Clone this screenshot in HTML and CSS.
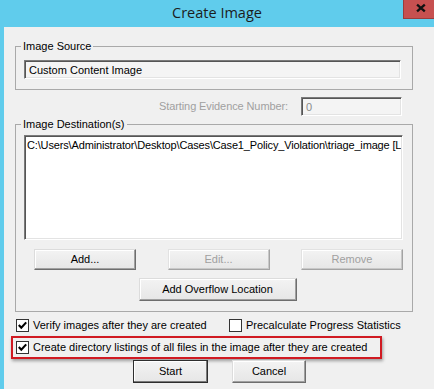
FILE: index.html
```html
<!DOCTYPE html>
<html lang="en">
<head>
    <meta charset="UTF-8">
    <title>Create Image</title>
    <link rel="stylesheet" href="styles.css">
</head>
<body>
    <div class="window">
        <div class="titlebar">
            Create Image
            <span class="close">
                <svg width="31" height="18" viewBox="0 0 31 18">
                    <path d="M13.5 4.5 L21.5 11.5 M21.5 4.5 L13.5 11.5" stroke="#111" stroke-width="2.4" fill="none"/>
                </svg>
            </span>
        </div>

        <div class="content">
            <fieldset class="group group-source">
                <legend>Image Source</legend>
                <div class="textbox source-box">Custom Content Image</div>
            </fieldset>

            <div class="evidence-row">
                <span class="label-disabled">Starting Evidence Number:</span>
                <div class="textbox evidence-box">0</div>
            </div>

            <fieldset class="group group-dest">
                <legend>Image Destination(s)</legend>
                <div class="listbox">
                    <div class="list-item">C:\Users\Administrator\Desktop\Cases\Case1_Policy_Violation\triage_image [L</div>
                </div>
                <div class="button-row">
                    <button class="btn btn-wide">Add...</button>
                    <button class="btn btn-wide" disabled>Edit...</button>
                    <button class="btn btn-wide" disabled>Remove</button>
                </div>
                <div class="overflow-row">
                    <button class="btn btn-overflow">Add Overflow Location</button>
                </div>
            </fieldset>

            <div class="check-row">
                <label class="check check-verify"><span class="box"><svg width="11" height="11" viewBox="0 0 11 11"><path d="M1.8 5 L4.3 7.8 L9.2 2.4" stroke="#000" stroke-width="2.1" fill="none"/></svg></span>Verify images after they are created</label>
                <label class="check"><span class="box"></span>Precalculate Progress Statistics</label>
            </div>

            <!-- red annotation frame -->
            <div class="highlight">
                <label class="check"><span class="box"><svg width="11" height="11" viewBox="0 0 11 11"><path d="M1.8 5 L4.3 7.8 L9.2 2.4" stroke="#000" stroke-width="2.1" fill="none"/></svg></span>Create directory listings of all files in the image after they are created</label>
            </div>

            <div class="action-row">
                <button class="btn btn-default">Start</button>
                <button class="btn btn-cancel">Cancel</button>
            </div>
        </div>
    </div>
</body>
</html>
```

FILE: styles.css
```css
* {
    margin: 0;
    padding: 0;
    box-sizing: border-box;
}

body {
    background: #f0f0f0;
    font-family: 'Liberation Sans', Arial, sans-serif;
    font-size: 11px;
    line-height: 13px;
    color: #000;
    overflow: hidden;
}

.window {
    width: 434px;
    height: 389px;
    display: flex;
    flex-direction: column;
}

.titlebar {
    position: relative;
    height: 27px;
    background: #60ccec;
    text-align: center;
    font-family: 'Open Sans', sans-serif;
    font-size: 14.5px;
    line-height: 25px;
    color: #1c1c1c;
}

.close {
    position: absolute;
    top: 0;
    right: 0;
    width: 31px;
    height: 19px;
    background: #c75050;
    border-left: 1px solid #9b3c3c;
    border-bottom: 1px solid #9b3c3c;
    display: flex;
}

.content {
    flex: 1;
    background: #f0f0f0;
    border-left: 4px solid #60ccec;
    padding: 13px 21px 0 11px;
}

.group {
    border: 1px solid #a9a9a9;
    min-width: 0;
    padding: 7px 9px 10px 8px;
}

.group legend {
    padding: 0 2px;
    margin-left: -3px;
    line-height: 13px;
}

.group-dest {
    margin-top: 2px;
    padding-top: 4px;
}

.textbox {
    height: 19px;
    line-height: 15px;
    padding-left: 4px;
    background: #f4f4f4;
    border: 1px solid;
    border-color: #7a7a7a #fff #fff #7a7a7a;
    box-shadow: inset 1px 1px #555, inset -1px -1px #e3e3e3;
    white-space: nowrap;
    overflow: hidden;
}

.source-box {
    margin-right: 2px;
    padding-top: 2px;
}

.evidence-row {
    margin-top: 7px;
    padding-right: 11px;
    display: flex;
    justify-content: flex-end;
    align-items: center;
    gap: 13px;
}

.label-disabled {
    color: #a0a0a0;
    letter-spacing: -0.1px;
}

.evidence-box {
    width: 101px;
    padding-top: 2px;
    color: #8a8a8a;
}

.listbox {
    height: 105px;
    background: #fff;
    border: 1px solid;
    border-color: #7a7a7a #fff #fff #7a7a7a;
    box-shadow: inset 1px 1px #555, inset -1px -1px #e3e3e3;
    padding: 3px 1px 0 2px;
    overflow: hidden;
}

.list-item {
    white-space: nowrap;
    overflow: hidden;
    letter-spacing: -0.15px;
}

.btn {
    font: inherit;
    color: #000;
    background: linear-gradient(180deg, #f3f3f3 0%, #e6e6e6 100%);
    border: 1px solid;
    border-color: #dcdcdc #6e6e6e #6e6e6e #dcdcdc;
    box-shadow: inset -1px -1px #a0a0a0, inset 1px 1px #fff;
    padding: 0;
}

.btn:disabled {
    color: #a0a0a0;
    border-color: #e2e2e2 #a3a3a3 #a3a3a3 #e2e2e2;
    box-shadow: inset -1px -1px #c8c8c8, inset 1px 1px #fff;
}

.button-row {
    margin-top: 9px;
    padding-left: 10px;
    display: flex;
    justify-content: space-between;
}

.btn-wide {
    width: 102px;
    height: 21px;
}

.overflow-row {
    margin-top: 8px;
    display: flex;
    justify-content: center;
}

.btn-overflow {
    width: 158px;
    height: 23px;
    margin-left: 8px;
}

.check-row {
    margin-top: 7px;
    padding-left: 1px;
    display: flex;
}

.check {
    display: flex;
    align-items: center;
    gap: 4px;
    white-space: nowrap;
}

.check-verify {
    width: 213px;
}

.box {
    width: 13px;
    height: 13px;
    border: 1px solid #333;
    background: #fff;
    display: flex;
    flex-shrink: 0;
}

.highlight {
    margin-top: 4px;
    margin-left: -4px;
    width: 371px;
    border: 2px solid #d01a22;
    padding: 3px 0 3px 3px;
    box-shadow: 1px 2px 3px rgba(0,0,0,0.35);
}

.action-row {
    margin-top: 1px;
    padding-left: 118px;
    display: flex;
    gap: 24px;
}

.btn-default {
    width: 75px;
    height: 23px;
    border: 1px solid #2e2e2e;
    box-shadow: inset -1px -1px #7a7a7a, inset 1px 1px #fff;
}

.btn-cancel {
    width: 74px;
    height: 23px;
}
```
